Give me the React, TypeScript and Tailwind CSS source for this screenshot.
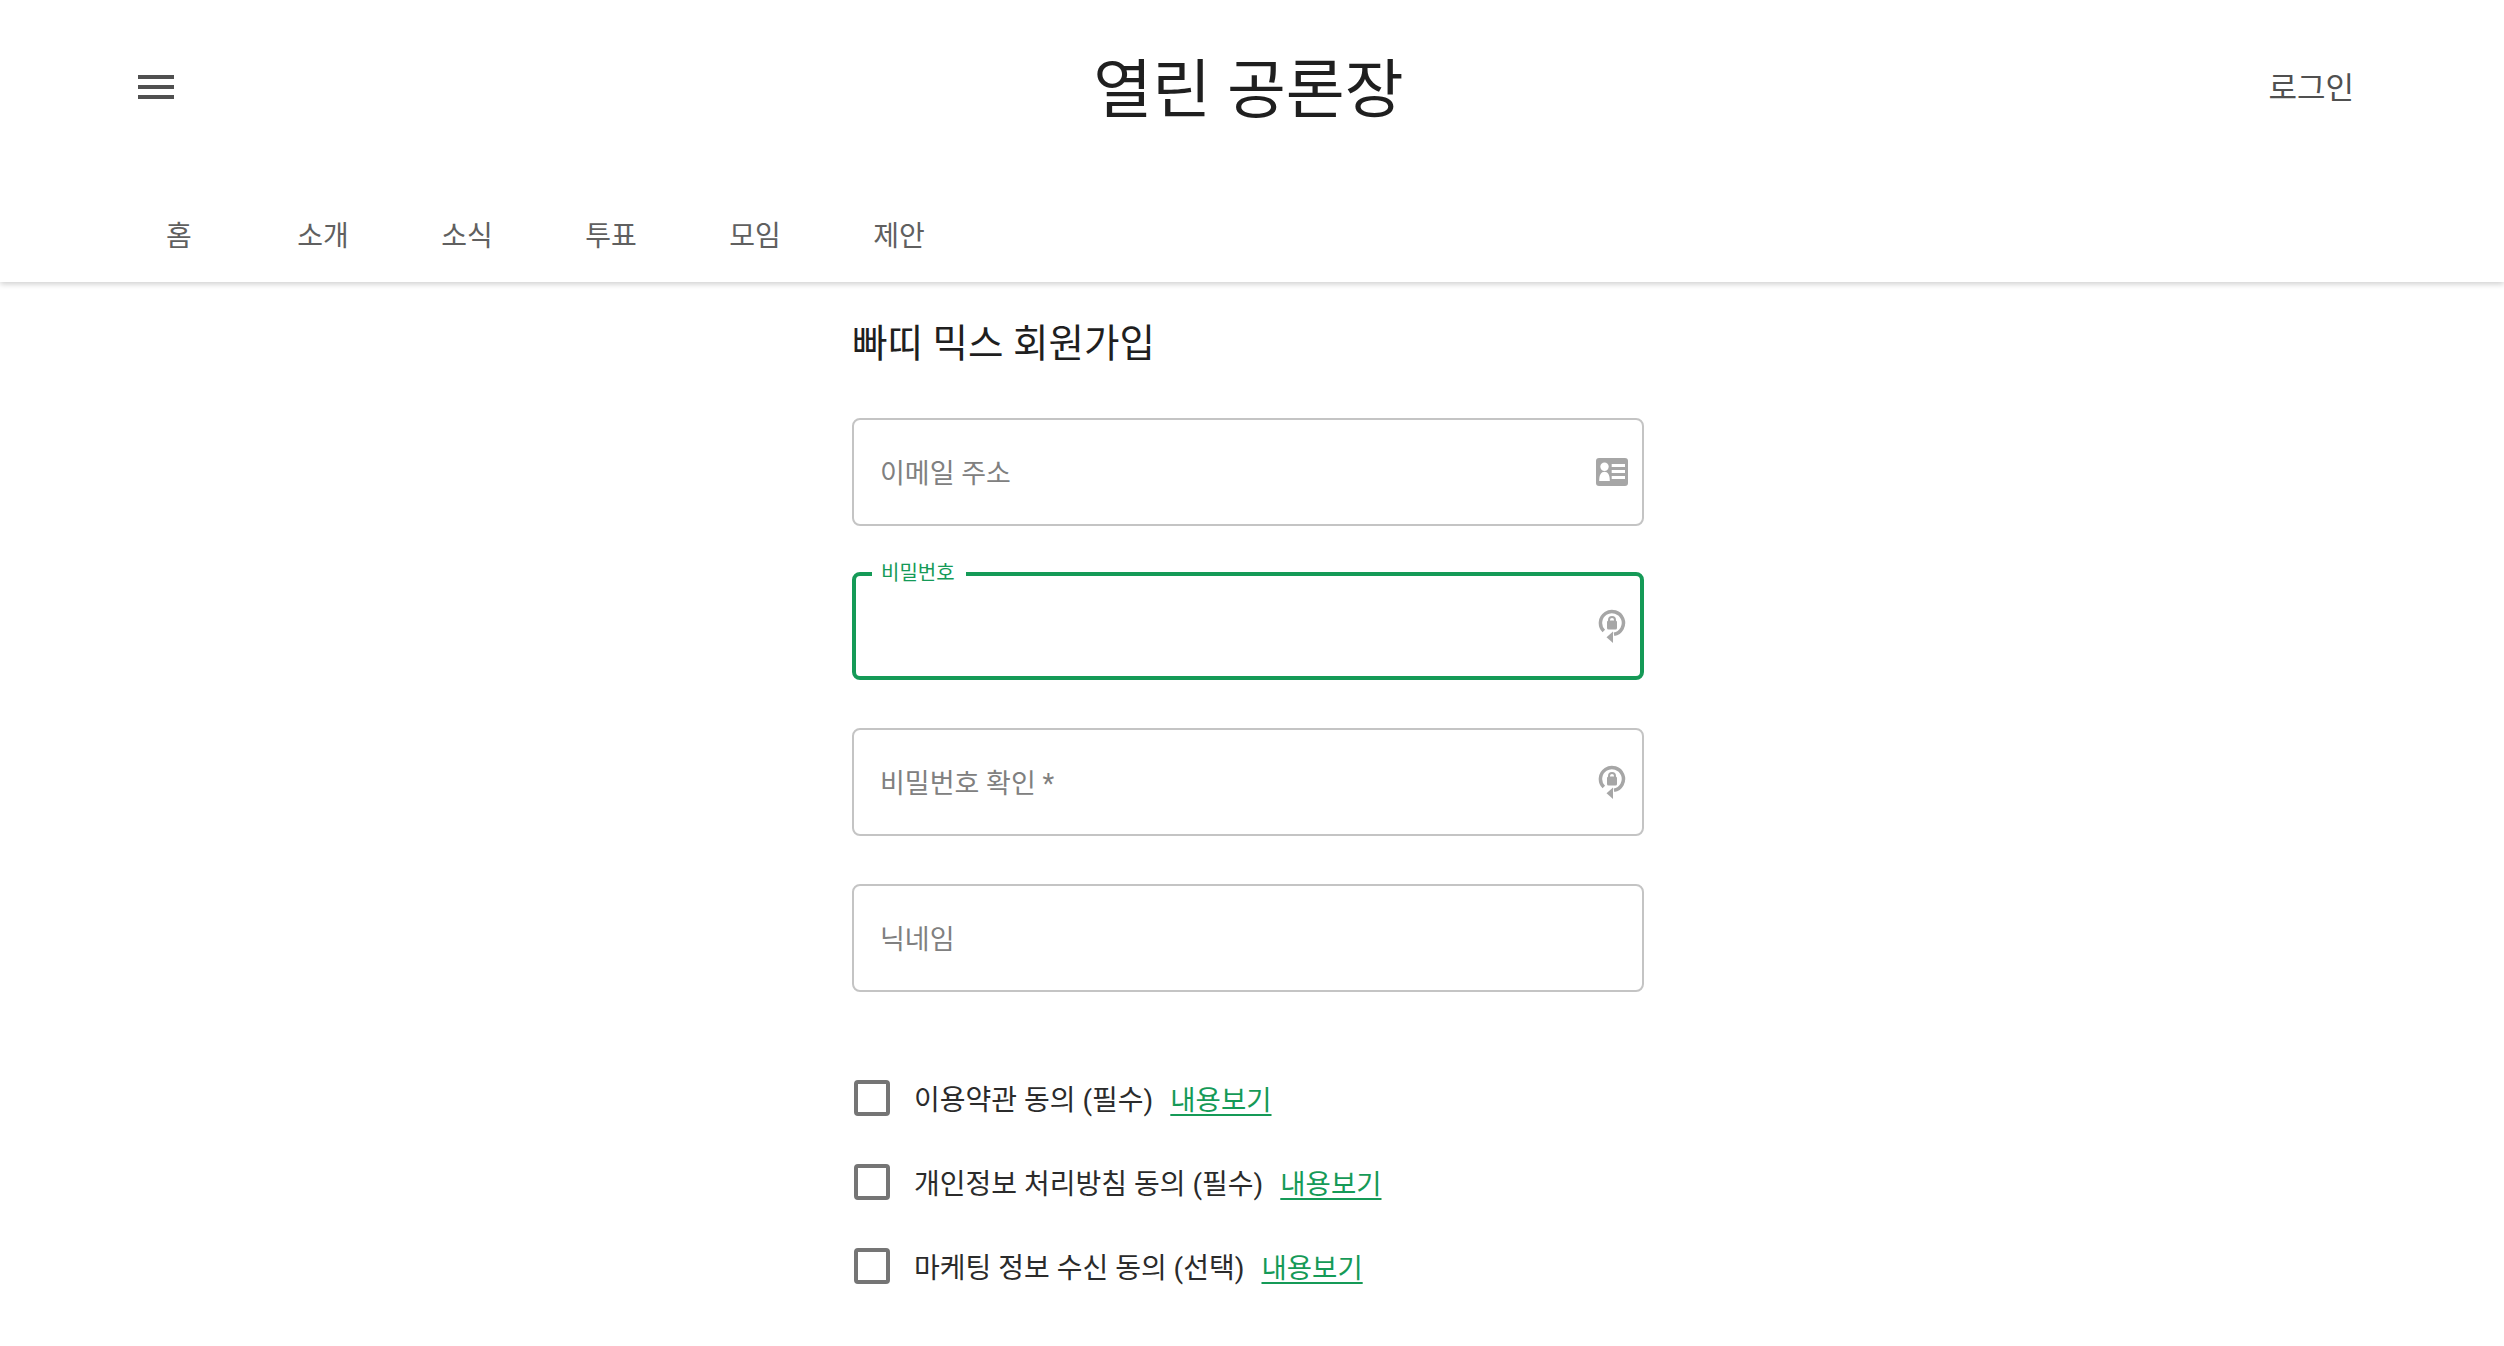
import React from 'react';

const tabs = ['홈', '소개', '소식', '투표', '모임', '제안'];

const MenuIcon = () => (
  <svg width="36" height="24" viewBox="0 0 36 24" fill="#505050">
    <rect width="36" height="4" />
    <rect y="10" width="36" height="4" />
    <rect y="20" width="36" height="4" />
  </svg>
);

const IdCardIcon = () => (
  <svg width="32" height="28" viewBox="0 0 32 28" fill="none">
    <rect width="32" height="28" rx="3" fill="#a6a6a6" />
    <circle cx="8.500" cy="8.700" r="4.200" fill="#fff" />
    <path d="M3.200 23c0-6.500 2-9.300 5.300-9.300s5.300 2.800 5.300 9.300z" fill="#fff" />
    <path d="M15.700 6h13.300v3H15.700zM15.700 12h13.300v3H15.700zM15.700 18h13.300v3H15.700z" fill="#fff" />
  </svg>
);

const LockResetIcon = () => (
  <svg width="30" height="34" viewBox="0 0 30 34" fill="none">
    <path d="M5.800 21.600A11.500 11.500 0 1 1 16 24.800" stroke="#a6a6a6" strokeWidth="3.500" fill="none" transform="translate(0 0.500)" />
    <path d="M15 22.500v11.500l-6.500-5.700z" fill="#a6a6a6" />
    <rect x="9" y="11.500" width="10" height="9" rx="1.500" fill="#a6a6a6" />
    <path d="M11 12V11a3 3 0 0 1 6 0v1" stroke="#a6a6a6" strokeWidth="2" fill="none" />
  </svg>
);

const Field = ({ label, icon }: { label: string; icon?: React.ReactNode }) => (
  <div className="flex h-[108px] items-center justify-between rounded-[8px] border-2 border-[#c4c4c4] pl-[26px] pr-[14px]">
    <span className="pt-[5px] text-[27px] leading-none text-[#808080]">{label}</span>
    {icon}
  </div>
);

const Agree = ({ label }: { label: string }) => (
  <div className="flex h-[36px] items-center pl-[2px]">
    <div className="h-[36px] w-[36px] rounded-[4px] border-4 border-[#757575]" />
    <span className="ml-[24px] pt-[5px] text-[28px] text-[#2b2b2b]">{label}</span>
    <a className="ml-[17px] pt-[5px] text-[27.500px] text-[#159a57] underline underline-offset-4">내용보기</a>
  </div>
);

export default function App() {
  return (
    <div className="min-h-[1346px] overflow-hidden bg-white font-['Roboto','Noto_Sans_CJK_KR',sans-serif]">
      <header className="h-[282px] bg-white shadow-[0_2px_6px_rgba(0,0,0,0.2)]">
        <div className="grid h-[174px] grid-cols-[1fr_auto_1fr] items-center pl-[138px] pr-[140px]">
          <MenuIcon />
          <h1 className="pr-[5px] pt-[8px] text-[64px] font-normal leading-none text-[#1f1f1f]">열린 공론장</h1>
          <button className="mr-[10px] justify-self-end pt-[4px] text-[31px] text-[#505050]">로그인</button>
        </div>
        <nav className="mt-[12px] flex pl-[107px]">
          {tabs.map((t) => (
            <div key={t} className="flex h-[96px] w-[144px] items-center justify-center pt-[6px] text-[28px] text-[#606060]">
              {t}
            </div>
          ))}
        </nav>
      </header>
      <div className="pr-2">
        <main className="mx-auto w-[792px] pt-[34px]">
          <h2 className="text-[38.600px] font-normal leading-[56px] text-[#1f1f1f]">빠띠 믹스 회원가입</h2>
          <div className="mt-[46px] flex flex-col gap-[48px]">
            <Field label="이메일 주소" icon={<IdCardIcon />} />
            <div className="relative -mt-[2px] flex h-[108px] items-center justify-end rounded-[8px] border-4 border-[#159a57] pr-[12px]">
              <span className="absolute -top-[15px] left-[16px] h-[24px] bg-white pl-[9px] pr-[11px] text-[20px] leading-[24px] text-[#159a57]">비밀번호</span>
              <LockResetIcon />
            </div>
            <Field label="비밀번호 확인 *" icon={<LockResetIcon />} />
            <Field label="닉네임" />
          </div>
          <div className="mt-[88px] flex flex-col gap-[48px]">
            <Agree label="이용약관 동의 (필수)" />
            <Agree label="개인정보 처리방침 동의 (필수)" />
            <Agree label="마케팅 정보 수신 동의 (선택)" />
          </div>
        </main>
      </div>
    </div>
  );
}
